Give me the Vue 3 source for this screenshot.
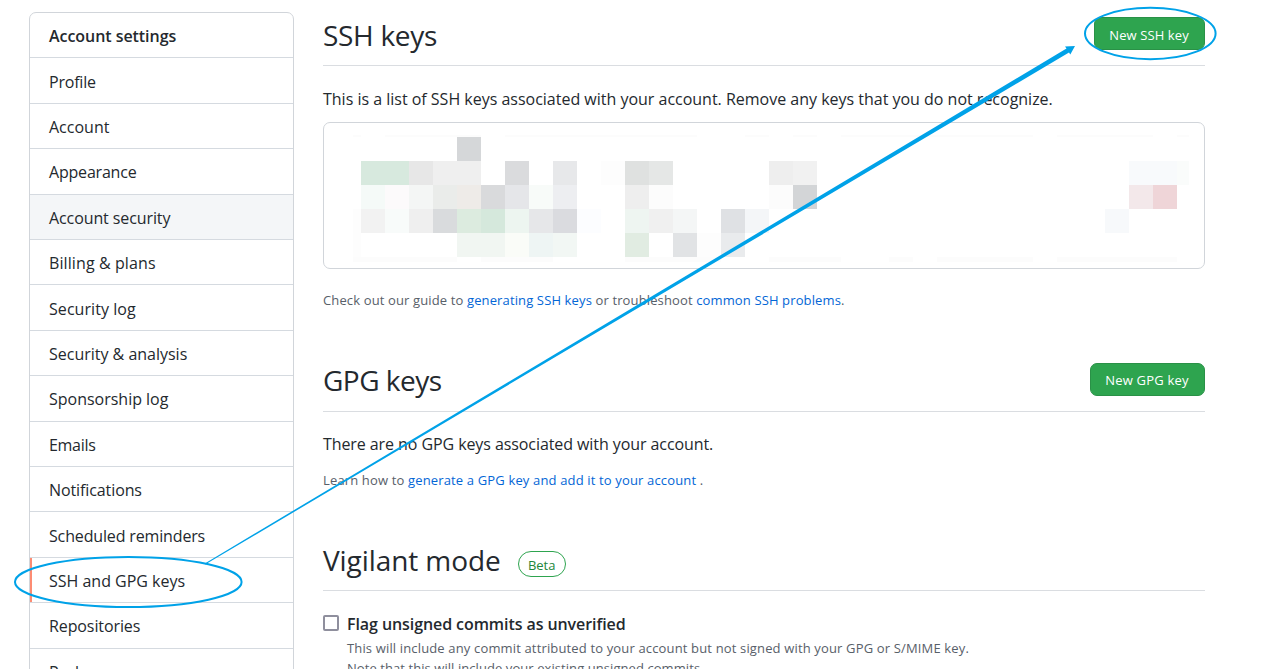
<script setup>
const items = [
  ['Profile', 'a'], ['Account', 'b'], ['Appearance', 'c'], ['Account security', 'd'],
  ['Billing & plans', 'e'], ['Security log', 'f'], ['Security & analysis', 'g'],
  ['Sponsorship log', 'h'], ['Emails', 'i'], ['Notifications', 'j'],
  ['Scheduled reminders', 'k'], ['SSH and GPG keys', 'l'], ['Repositories', 'm'], ['Packages', 'n'],
]

// Redacted key details: [row, column, colour, column span]
const cells = [
  [1, 1, '#fcfcfc'], [1, 3, '#fcfcfc', 4], [1, 8, '#fcfcfc', 8], [1, 18, '#fcfcfc'], [1, 20, '#fcfcfc'],
  [1, 22, '#fcfcfc', 8], [1, 31, '#fcfcfc', 4], [1, 36, '#fcfcfc'],
  [2, 6, '#d5d7d9'],
  [3, 2, '#d7e9de', 2], [3, 4, '#e7e7e7'], [3, 5, '#efefef', 2], [3, 8, '#dadbdd'], [3, 10, '#e7e8ea'],
  [3, 12, '#fdfdfd'], [3, 13, '#dfe1e0'], [3, 14, '#e5e7e6'], [3, 19, '#eeeeee'], [3, 20, '#f1f1f1'],
  [3, 34, '#f8fafc', 2], [3, 36, '#fafcfb'],
  [4, 2, '#f5faf8'], [4, 3, '#fcfafb'], [4, 4, '#f4f6f5'], [4, 5, '#eaecea'], [4, 6, '#eeebe8'],
  [4, 7, '#d9dadc'], [4, 8, '#e5e6e9'], [4, 9, '#f8fbf9'], [4, 10, '#edeef1'], [4, 13, '#eeeeee'],
  [4, 14, '#fcfcfc'], [4, 19, '#fcfcfc'], [4, 20, '#d3d5d7'], [4, 34, '#f3e8ea'], [4, 35, '#efd5d8'],
  [5, 1, '#fdfdfd'], [5, 2, '#f2f2f2'], [5, 3, '#f8fbfa'], [5, 4, '#efefef'], [5, 5, '#d9dbdd'],
  [5, 6, '#dcebdf'], [5, 7, '#d5e8dc'], [5, 8, '#edf5f0'], [5, 9, '#e6e7e9'], [5, 10, '#dadbdf'],
  [5, 11, '#fcfdff'], [5, 13, '#eef5f1'], [5, 14, '#f0f0f0'], [5, 15, '#f4f6f6'], [5, 17, '#dfe1e4'],
  [5, 18, '#f4f6f8'], [5, 33, '#f7f9fb'],
  [6, 1, '#fdfdfd'], [6, 6, '#f1f6f2', 2], [6, 8, '#fafcf8'], [6, 9, '#eef5f4'], [6, 10, '#f2f7f4'],
  [6, 13, '#e1ece2'], [6, 15, '#e1e3e5'], [6, 16, '#fdfdfd'], [6, 17, '#e9ebed'],
  [7, 1, '#fcfcfc', 5], [7, 7, '#fcfcfc', 3], [7, 13, '#fcfcfc', 4], [7, 19, '#fcfcfc', 3],
  [7, 24, '#fcfcfc'], [7, 26, '#fcfcfc', 4], [7, 31, '#fcfcfc', 5],
]
const place = ([r, c, color, span = 1]) => ({ gridArea: `${r} / ${c} / auto / span ${span}`, background: color })
</script>

<template>
  <div class="page">
    <nav class="menu">
      <div class="menu-title"><span>Account settings</span></div>
      <a v-for="[label, key] in items" :key="key" class="item"
        :class="['i-' + key, { hover: key === 'd', current: key === 'l' }]"><span>{{ label }}</span></a>
    </nav>

    <main class="content">
      <section class="ssh">
        <header class="head"><h2 class="t-ssh">SSH keys</h2><button class="btn b-ssh">New SSH key</button></header>
        <p class="lead l-ssh">This is a list of SSH keys associated with your account. Remove any keys that you do not recognize.</p>
        <div class="keybox"><div class="mosaic"><i v-for="(c, n) in cells" :key="n" :style="place(c)"></i></div></div>
        <p class="note n-ssh">Check out our guide to <a>generating SSH keys</a> or troubleshoot <a>common SSH problems</a>.</p>
      </section>
      <section class="gpg">
        <header class="head"><h2 class="t-gpg">GPG keys</h2><button class="btn b-gpg">New GPG key</button></header>
        <p class="lead l-gpg">There are no GPG keys associated with your account.</p>
        <p class="note n-gpg">Learn how to <a>generate a GPG key and add it to your account</a> .</p>
      </section>
      <section class="vigilant">
        <header class="head"><h2 class="t-vig">Vigilant mode</h2><span class="beta">Beta</span></header>
        <div class="flag">
          <span class="check"></span>
          <div class="flag-body">
            <strong>Flag unsigned commits as unverified</strong>
            <p class="note f-1">This will include any commit attributed to your account but not signed with your GPG or S/MIME key.</p>
            <p class="note f-2">Note that this will include your existing unsigned commits.</p>
          </div>
        </div>
      </section>
    </main>

    <svg class="marks" width="1280" height="669" viewBox="0 0 1280 669">
      <g fill="none" stroke="#00a2e8" stroke-width="2">
        <ellipse cx="128.3" cy="582" rx="113.3" ry="25" />
        <ellipse cx="1150.3" cy="33.5" rx="65.3" ry="25.7" />
      </g>
      <path fill="#00a2e8" d="M204.8 563.4L1066.5 48.5L1065 46.5L1075 46L1070.3 54.5L1069 52.6L205.2 564.6Z" />
    </svg>
  </div>
</template>

<style>
body { margin: 0; overflow: hidden; background: #fff; }
</style>
<style scoped>
.page {
  position: relative; display: flex; gap: 29px; height: 669px; overflow: hidden;
  box-sizing: border-box; padding: 12px 75px 0 29px;
  font-family: "Open Sans", "Noto Sans", sans-serif; color: #24292e;
}
h2, p { margin: 0; font-weight: 400; white-space: nowrap; }
.menu {
  flex: none; box-sizing: border-box; width: 265px; height: 700px; border: 1px solid #d1d5da;
  border-radius: 7px 7px 0 0; font-size: 16px; white-space: nowrap;
}
.menu-title { height: 44.3px; line-height: 46px; padding-left: 19px; font-weight: 600; letter-spacing: -0.05px; }
.item {
  display: block; box-sizing: border-box; height: 45.41px; border-top: 1px solid #d5dae0;
  padding-left: 19px; line-height: 46px; letter-spacing: -0.1px;
}
.i-a, .i-c { letter-spacing: -0.2px; }
.i-a, .i-f, .i-k { line-height: 48px; }
.i-b { letter-spacing: 0; }
.i-e { letter-spacing: 0.1px; }
.i-f { letter-spacing: 0.06px; }
.i-g, .i-h, .i-l { letter-spacing: -0.01px; }
.i-i { letter-spacing: -0.3px; }
.i-k { letter-spacing: -0.15px; }
.hover { background: #f4f6f8; }
.current { box-shadow: inset 2px 0 #fd8c73; }
.content { flex: 1; min-width: 0; }
.head { display: flex; align-items: center; box-sizing: border-box; height: 54px; padding-bottom: 8px; border-bottom: 1px solid #dadde1; }
h2 { font-size: 28px; line-height: 36px; letter-spacing: -0.3px; }
.t-gpg { margin-bottom: 2px; letter-spacing: -0.5px; }
.t-vig { letter-spacing: -0.08px; }
.btn {
  margin: 0 0 2px auto; box-sizing: border-box; height: 33px; padding: 0; border: 1px solid #2a9147;
  border-radius: 7px; background: #2ea44f; color: #fff; font: 13px/32px "Open Sans", "Noto Sans", sans-serif;
  letter-spacing: 0.1px;
}
.b-ssh { width: 111px; padding: 1px 1px 0 0; }
.b-gpg { width: 115px; padding-right: 1px; letter-spacing: 0.22px; }
.lead { font-size: 16px; line-height: 24px; }
.note { font-size: 13px; line-height: 20px; color: #586069; letter-spacing: 0.15px; }
.note a { color: #0366d6; }
.l-ssh { margin-top: 21px; letter-spacing: -0.01px; }
.keybox { box-sizing: border-box; height: 147px; margin-top: 11px; border: 1px solid #d1d5da; border-radius: 7px; padding: 12px 0 0 29px; }
.mosaic {
  display: grid; width: 836px;
  grid-template-columns: 8px repeat(34, 24px) 12px; grid-template-rows: 2px repeat(5, 24px) 5px;
}
.n-ssh { margin-top: 21px; letter-spacing: 0.13px; }
.gpg { margin-top: 48px; }
.l-gpg { margin-top: 20px; letter-spacing: -0.08px; }
.n-gpg { margin-top: 14px; }
.vigilant { margin-top: 47px; }
.beta {
  box-sizing: border-box; width: 48px; height: 26px; margin: 8px 0 0 17px; border: 1px solid #2ea44f;
  border-radius: 13px; color: #22863a; font-size: 13px; line-height: 26px; text-align: center;
}
.flag { display: flex; gap: 8px; margin-top: 21px; }
.check { flex: none; box-sizing: border-box; width: 16px; height: 16px; margin-top: 3px; border: 2px solid #8f8f9d; border-radius: 2px; }
.flag strong { display: block; margin-bottom: 2px; font-size: 16px; line-height: 24px; font-weight: 600; white-space: nowrap; letter-spacing: -0.08px; }
.f-2 { letter-spacing: 0.07px; }
.marks { position: absolute; inset: 0; }
</style>
